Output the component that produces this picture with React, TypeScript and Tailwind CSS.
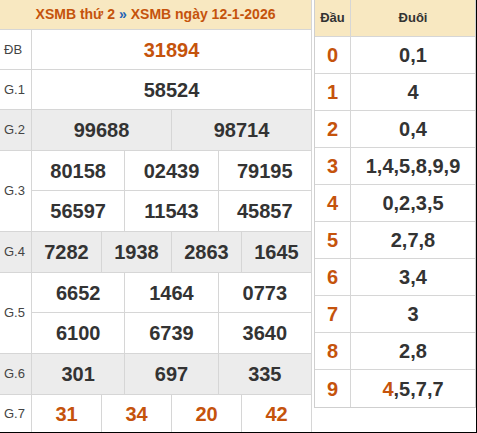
import React from 'react';

const orange = 'text-[#c5530c]';

type Row = {
  label?: string;
  nums: string[][]; // sub-rows
  gray?: boolean;
  accent?: boolean;
  h: string;
};

const rows: Row[] = [
  { label: 'ĐB', nums: [['31894']], accent: true, h: 'h-[39px]' },
  { label: 'G.1', nums: [['58524']], h: 'h-[39px]' },
  { label: 'G.2', nums: [['99688', '98714']], gray: true, h: 'h-[40px]' },
  { label: 'G.3', nums: [['80158', '02439', '79195'], ['56597', '11543', '45857']], h: 'h-[40px]' },
  { label: 'G.4', nums: [['7282', '1938', '2863', '1645']], gray: true, h: 'h-[40px]' },
  { label: 'G.5', nums: [['6652', '1464', '0773'], ['6100', '6739', '3640']], h: 'h-[40px]' },
  { label: 'G.6', nums: [['301', '697', '335']], gray: true, h: 'h-[40px]' },
  { label: 'G.7', nums: [['31', '34', '20', '42']], accent: true, h: 'h-[37px]' },
];

const loto: [string, React.ReactNode][] = [
  ['0', '0,1'],
  ['1', '4'],
  ['2', '0,4'],
  ['3', '1,4,5,8,9,9'],
  ['4', '0,2,3,5'],
  ['5', '2,7,8'],
  ['6', '3,4'],
  ['7', '3'],
  ['8', '2,8'],
  ['9', (<><span className={orange}>4</span>,5,7,7</>)],
];

function PrizeRow({ row, last }: { row: Row; last: boolean }) {
  return (
    <div className={`flex ${row.gray ? 'bg-[#ececec]' : 'bg-white'} ${last ? '' : 'border-b border-[#d6d6d6]'}`}>
      <div className="w-[32px] flex-shrink-0 flex items-center pl-[4px] text-[13px] text-[#444] border-r border-[#d6d6d6]">
        {row.label}
      </div>
      <div className="flex-1 flex flex-col">
        {row.nums.map((line, i) => (
          <div
            key={i}
            className={`flex ${row.h} ${i < row.nums.length - 1 ? 'border-b border-[#d6d6d6]' : ''}`}
          >
            {line.map((n, j) => (
              <div
                key={j}
                className={`flex-1 flex items-center justify-center text-[20px] font-bold ${
                  row.accent ? orange : 'text-[#333]'
                } ${j < line.length - 1 ? 'border-r border-[#d6d6d6]' : ''}`}
              >
                {n}
              </div>
            ))}
          </div>
        ))}
      </div>
    </div>
  );
}

export default function App() {
  return (
    <div
      className="w-[477px] h-[433px] bg-white flex gap-[2px] border-r border-b border-black overflow-hidden"
      style={{ fontFamily: '"Liberation Sans", Arial, sans-serif' }}
    >
      {/* Bảng kết quả */}
      <div className="w-[312px] flex-shrink-0 flex flex-col border-r border-[#d6d6d6]">
        <div className="h-[37px] flex items-center justify-center bg-[#f8e8c1] border-b border-[#d6d6d6] text-[14px] font-bold">
          <span className={orange}>XSMB thứ 2</span>
          <span className="text-[#1f63b5] mx-[4px]">»</span>
          <span className={orange}>XSMB ngày 12-1-2026</span>
        </div>
        {rows.map((r, i) => (
          <PrizeRow key={r.label} row={r} last={i === rows.length - 1} />
        ))}
      </div>

      {/* Bảng loto đầu đuôi */}
      <div className="flex-1 flex flex-col">
        <div className="border-l border-r border-b border-[#cfcfcf]">
          <div className="flex h-[37px] bg-[#f8e8c1] border-b border-[#d6d6d6] text-[13px] font-bold text-[#333]">
            <div className="w-[36px] flex items-center justify-center border-r border-[#d6d6d6]">Đầu</div>
            <div className="flex-1 flex items-center justify-center">Đuôi</div>
          </div>
          {loto.map(([head, tail], i) => (
            <div
              key={head}
              className={`flex h-[37px] ${i < loto.length - 1 ? 'border-b border-[#d6d6d6]' : ''}`}
            >
              <div className={`w-[36px] flex items-center justify-center border-r border-[#d6d6d6] text-[20px] font-bold ${orange}`}>
                {head}
              </div>
              <div className="flex-1 flex items-center justify-center text-[20px] font-bold text-[#333]">
                {tail}
              </div>
            </div>
          ))}
        </div>
      </div>
    </div>
  );
}
